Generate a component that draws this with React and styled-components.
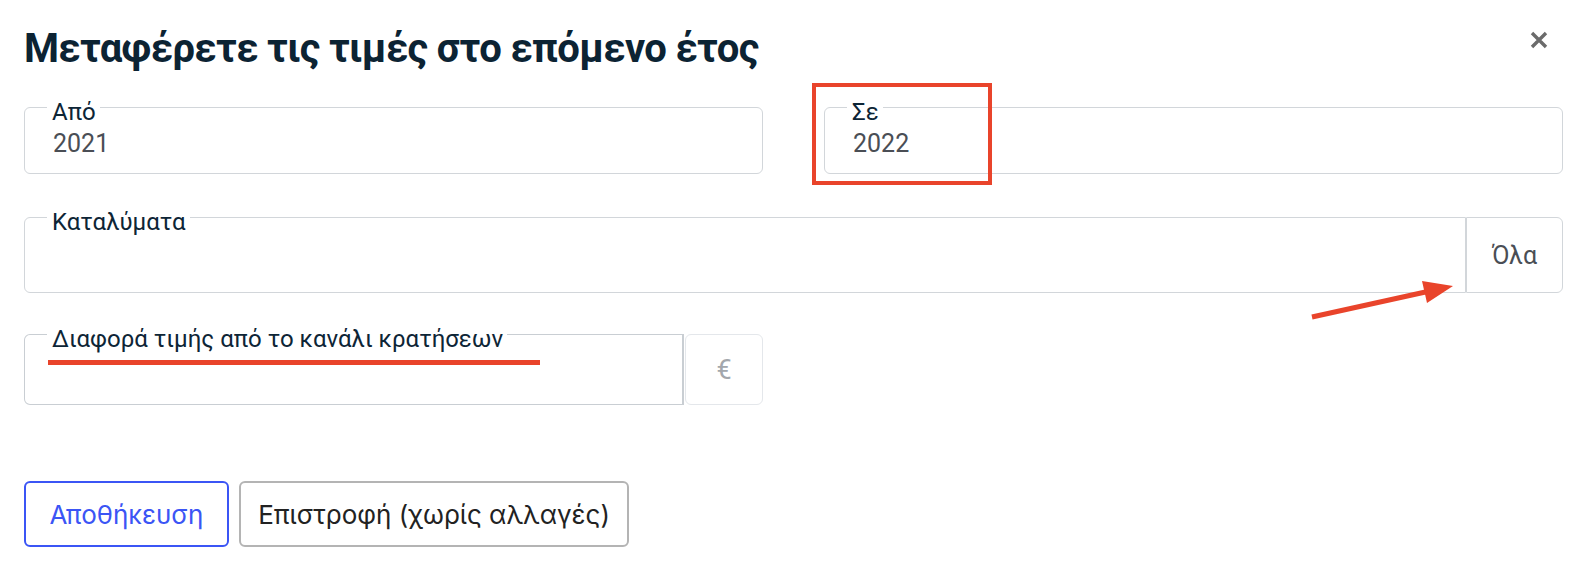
import React from 'react';
import styled, { createGlobalStyle } from 'styled-components';

const GlobalStyle = createGlobalStyle`
  html, body {
    margin: 0;
    background: #fff;
  }
  body {
    font-family: Roboto, "Noto Sans", sans-serif;
  }
`;

const Page = styled.div`
  position: relative;
  width: 1586px;
  height: 566px;
  box-sizing: border-box;
  padding: 25px 23px 0 24px;
  overflow: hidden;
`;

const Header = styled.header`
  display: flex;
  justify-content: space-between;
  align-items: flex-start;
  height: 82px;
`;

const Title = styled.h1`
  margin: 0;
  font-family: Roboto, sans-serif;
  font-weight: 700;
  font-size: 40px;
  line-height: 48px;
  letter-spacing: -0.65px;
  color: #0c2333;
`;

const Close = styled.button`
  border: 0;
  background: none;
  padding: 0;
  margin: 6px 15px 0 0;
  width: 18px;
  height: 18px;
  display: flex;
  cursor: pointer;
`;

const Row = styled.div`
  display: grid;
  grid-template-columns: ${p => p.$cols || '1fr'};
  column-gap: 61px;
  margin-bottom: ${p => p.$after}px;
`;

const Group = styled.div`
  display: flex;
`;

const Box = styled.div`
  position: relative;
  flex: 1;
  box-sizing: border-box;
  height: ${p => p.$h}px;
  border: 1px solid ${p => p.$border || '#d2d6da'};
  border-right-width: ${p => p.$rightW || 1}px;
  border-radius: ${p => (p.$joined ? '6px 0 0 6px' : '6px')};
  padding: ${p => p.$padTop || 23}px 28px 0;
`;

const FloatLabel = styled.span`
  position: absolute;
  top: -8px;
  left: 22px;
  padding: 0 4px 0 5px;
  background: #fff;
  font-size: 24px;
  line-height: 24px;
  font-weight: 400;
  color: #0d2536;
  white-space: nowrap;
`;

const Value = styled.input`
  display: block;
  width: 100%;
  border: 0;
  outline: none;
  padding: 0;
  margin: 0;
  background: transparent;
  font-family: Roboto, sans-serif;
  font-size: 25px;
  line-height: 24px;
  height: 24px;
  color: #4a4e55;
`;

const Addon = styled.div`
  box-sizing: border-box;
  width: ${p => p.$w}px;
  height: ${p => p.$h}px;
  margin-left: ${p => p.$gap || 0}px;
  display: flex;
  align-items: center;
  justify-content: center;
  border: 1px solid ${p => p.$border || '#d2d6da'};
  border-radius: ${p => (p.$joined ? '0 6px 6px 0' : '6px')};
  font-size: ${p => p.$size || 25}px;
  color: ${p => p.$color || '#4a4e55'};
`;

const Actions = styled.div`
  display: flex;
  gap: 10px;
`;

const Button = styled.button`
  box-sizing: border-box;
  width: ${p => p.$w}px;
  height: 66px;
  padding: 0;
  background: #fff;
  border: 2px solid ${p => (p.$primary ? '#3b55f5' : '#b4b4b4')};
  border-radius: 6px;
  font-family: Inter, Roboto, sans-serif;
  font-size: 26px;
  color: ${p => (p.$primary ? '#3b55f5' : '#222')};
  cursor: pointer;
`;

const Overlay = styled.svg`
  position: absolute;
  left: 0;
  top: 0;
  pointer-events: none;
`;

const RED = '#e9442b';

export default function App() {
  return (
    <>
      <GlobalStyle />
      <Page>
        <Header>
          <Title>Μεταφέρετε τις τιμές στο επόμενο έτος</Title>
          <Close aria-label="close">
            <svg width="18" height="18" viewBox="0 0 18 18">
              <path d="M2 2 L16 16 M16 2 L2 16" stroke="#6b6b6b" strokeWidth="3.4" />
            </svg>
          </Close>
        </Header>

        <Row $cols="1fr 1fr" $after={43}>
          <Box $h={67}>
            <FloatLabel>Από</FloatLabel>
            <Value defaultValue="2021" />
          </Box>
          <Box $h={67}>
            <FloatLabel>Σε</FloatLabel>
            <Value defaultValue="2022" />
          </Box>
        </Row>

        <Row $after={41}>
          <Group>
            <Box $h={76} $joined>
              <FloatLabel>Καταλύματα</FloatLabel>
            </Box>
            <Addon $w={97} $h={76} $joined>Όλα</Addon>
          </Group>
        </Row>

        <Row $cols="1fr 1fr" $after={76}>
          <Group>
            <Box $h={71} $joined $border="#c9ced3" $rightW={2}>
              <FloatLabel>Διαφορά τιμής από το κανάλι κρατήσεων</FloatLabel>
            </Box>
            <Addon $w={78} $h={71} $gap={1} $border="#e4e7eb" $color="#a3a7ac" $size={27}>€</Addon>
          </Group>
        </Row>

        <Actions>
          <Button $primary $w={205}>Αποθήκευση</Button>
          <Button $w={390}>Επιστροφή (χωρίς αλλαγές)</Button>
        </Actions>

        <Overlay width="1586" height="566">
          <rect x="814" y="85" width="176" height="98" fill="none" stroke={RED} strokeWidth="4" />
          <line x1="48" y1="362.5" x2="540" y2="362.5" stroke={RED} strokeWidth="5" />
          <line x1="1312" y1="317" x2="1430" y2="291" stroke={RED} strokeWidth="5" />
          <polygon points="1453,286 1427,303 1422,281" fill={RED} />
        </Overlay>
      </Page>
    </>
  );
}
